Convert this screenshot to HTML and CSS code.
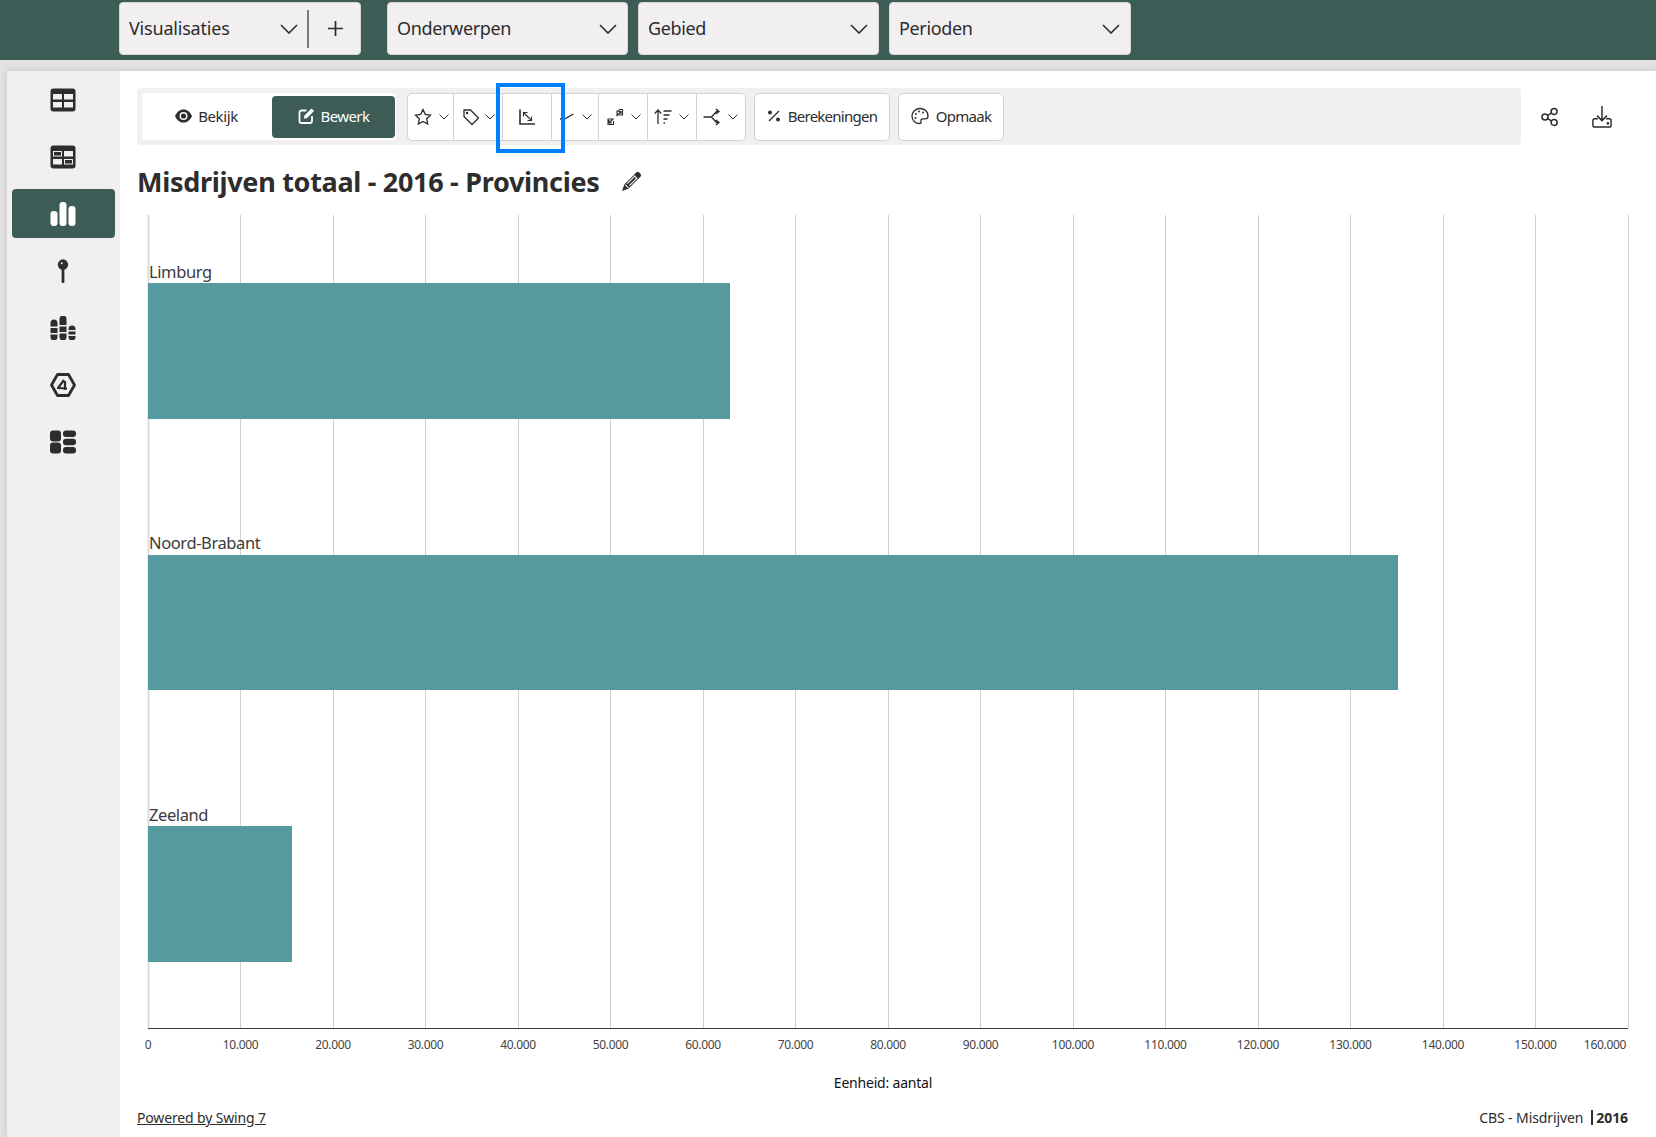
FILE: index.html
```html
<!DOCTYPE html>
<html lang="nl">
<head>
<meta charset="utf-8">
<title>Misdrijven totaal</title>
<link rel="stylesheet" href="styles.css">
</head>
<body>
<header class="topbar">
  <div class="select select-vis">
    <span class="select-label">Visualisaties</span>
    <svg class="chev-lg" viewBox="0 0 18 10"><path d="M1 1l8 8 8-8"/></svg>
    <span class="select-div"></span>
    <svg class="plus" viewBox="0 0 18 18"><path d="M9 1v16M1 9h16"/></svg>
  </div>
  <div class="select select-ond"><span class="select-label">Onderwerpen</span><svg class="chev-lg" viewBox="0 0 18 10"><path d="M1 1l8 8 8-8"/></svg></div>
  <div class="select select-geb"><span class="select-label">Gebied</span><svg class="chev-lg" viewBox="0 0 18 10"><path d="M1 1l8 8 8-8"/></svg></div>
  <div class="select select-per"><span class="select-label">Perioden</span><svg class="chev-lg" viewBox="0 0 18 10"><path d="M1 1l8 8 8-8"/></svg></div>
</header>
<div class="app">
  <nav class="sidebar">
    <div class="nav-item"><svg class="nav-icon" viewBox="0 0 26 24"><rect x="0.5" y="0.5" width="25" height="23" rx="3" fill="#2d2d2d"/><rect x="3" y="6" width="9" height="5.5" fill="#f1eff0"/><rect x="14" y="6" width="9" height="5.5" fill="#f1eff0"/><rect x="3" y="14" width="9" height="5.5" fill="#f1eff0"/><rect x="14" y="14" width="9" height="5.5" fill="#f1eff0"/></svg></div>
    <div class="nav-item"><svg class="nav-icon" viewBox="0 0 26 24"><rect x="0.5" y="0.5" width="25" height="23" rx="3" fill="#2d2d2d"/><rect x="3.5" y="6.5" width="8" height="4.5" fill="none" stroke="#f1eff0"/><rect x="14" y="6" width="9" height="5.5" fill="#f1eff0"/><rect x="3" y="14" width="9" height="5.5" fill="#f1eff0"/><rect x="14.5" y="14.5" width="8" height="4.5" fill="none" stroke="#f1eff0"/></svg></div>
    <div class="nav-item nav-active"><svg class="nav-icon" viewBox="0 0 26 24"><rect x="0.5" y="9" width="7" height="15" rx="3" fill="#fff"/><rect x="9.5" y="0" width="7" height="24" rx="3" fill="#fff"/><rect x="18.5" y="4" width="7" height="20" rx="3" fill="#fff"/></svg></div>
    <div class="nav-item"><svg class="nav-icon" viewBox="0 0 26 26"><circle cx="13" cy="6" r="5.6" fill="#2d2d2d"/><circle cx="11.6" cy="4.6" r="1" fill="#f1eff0"/><rect x="11.5" y="9" width="3" height="17" rx="1.2" fill="#2d2d2d"/></svg></div>
    <div class="nav-item"><svg class="nav-icon" viewBox="0 0 26 24"><path d="M0.500 7a3.500 3.500 0 0 1 7 0v3.500h-7zM0.500 12h7v5h-7zM0.500 18.500h7V21a3 3 0 0 1-7 0zM9.500 3a3.500 3.500 0 0 1 7 0v6h-7zM9.500 10.500h7V16h-7zM9.500 17.500h7V21a3.500 3.500 0 0 1-7 0zM18.500 13a3.500 3.500 0 0 1 7 0v1h-7zM18.500 15.500h7v3h-7zM18.500 20h7v1a3.500 3.500 0 0 1-7 0z" fill="#2d2d2d"/></svg></div>
    <div class="nav-item"><svg class="nav-icon" viewBox="0 0 26 24"><path d="M7.500 1.500h11L24.500 12l-6 10.500h-11L1.500 12z" fill="none" stroke="#2d2d2d" stroke-width="2.800" stroke-linejoin="round"/><path d="M14 7L8 15l9 .5M15 8v9" fill="none" stroke="#2d2d2d" stroke-width="2.200" stroke-linejoin="round"/></svg></div>
    <div class="nav-item"><svg class="nav-icon" viewBox="0 0 26 24"><rect x="0" y="0.500" width="11" height="11" rx="3" fill="#2d2d2d"/><rect x="0" y="12.500" width="11" height="11" rx="3" fill="#2d2d2d"/><rect x="13" y="0.500" width="13" height="6.500" rx="3" fill="#2d2d2d"/><rect x="13" y="8.700" width="13" height="6.500" rx="3" fill="#2d2d2d"/><rect x="13" y="17" width="13" height="6.500" rx="3" fill="#2d2d2d"/></svg></div>
  </nav>
  <main class="content">
    <div class="toolrow">
      <div class="toolbar">
        <div class="mode">
          <span class="mode-btn mode-view"><svg class="ic-mode" viewBox="0 0 18 14"><path d="M9 0C5 0 1.800 2.800 0 7c1.800 4.200 5 7 9 7s7.200-2.800 9-7c-1.800-4.200-5-7-9-7z" fill="#2d2d2d"/><circle cx="9" cy="7" r="4.200" fill="#fff"/><circle cx="9" cy="7" r="2.700" fill="#2d2d2d"/></svg>Bekijk</span>
          <span class="mode-btn mode-on"><svg class="ic-mode" viewBox="0 0 16 16"><path d="M8 2.500H3A2 2 0 0 0 1 4.500v8.500a2 2 0 0 0 2 2h8.500a2 2 0 0 0 2-2V8" fill="none" stroke="#fff" stroke-width="1.800"/><path d="M13 .5l2.500 2.500-7 7-3.300.8.800-3.300z" fill="#fff"/></svg>Bewerk</span>
        </div>
        <div class="group">
          <div class="seg seg-a"><svg class="ic" viewBox="0 0 18 18"><path d="M9 1.500l2.300 4.900 5.200.7-3.800 3.700.9 5.300L9 13.500l-4.600 2.600.9-5.300-3.800-3.700 5.200-.7z"/></svg><svg class="chev" viewBox="0 0 10 6"><path d="M.5.500L5 5 9.500.500"/></svg></div>
          <div class="seg seg-b"><svg class="ic ic-tag" viewBox="0 0 18 18"><path d="M2 2h6.500l8 8-6.500 6.500-8-8z" stroke-linejoin="round"/><circle cx="5" cy="5" r=".6"/></svg><svg class="chev" viewBox="0 0 10 6"><path d="M.5.500L5 5 9.500.500"/></svg></div>
          <div class="seg seg-c"><svg class="ic" viewBox="0 0 18 18"><path d="M2 1.500v14.500h15" stroke-width="1.600"/><path d="M5.500 4.500l8 8M5.500 8.500v-4h4M13.500 8.500v4h-4" stroke-width="1.100"/></svg></div>
          <div class="seg seg-d"><svg class="ic ic-line" viewBox="0 0 18 18"><path d="M1 11h4.500l9-5"/></svg><svg class="chev" viewBox="0 0 10 6"><path d="M.5.500L5 5 9.500.500"/></svg></div>
          <div class="seg seg-e"><svg class="ic" viewBox="0 0 18 18"><path d="M6 11H2v5.500h5.500V13M7.500 10.500l-4.500 4.500M3 12v3h3" stroke-width="1.100"/><path d="M11 7V3h1.500l1-1.500h3V7h-4M10.500 8L15 3.500M12.500 3.500H15V6" stroke-width="1.100"/></svg><svg class="chev" viewBox="0 0 10 6"><path d="M.5.500L5 5 9.500.500"/></svg></div>
          <div class="seg seg-f"><svg class="ic" viewBox="0 0 18 18"><path d="M4 16V2M.8 5.500L4 2l3.200 3.500M9.500 3h8M9.500 7h6M9.500 11h4M9.500 15h1.500"/></svg><svg class="chev" viewBox="0 0 10 6"><path d="M.5.500L5 5 9.500.500"/></svg></div>
          <div class="seg seg-g"><svg class="ic" viewBox="0 0 18 18"><path d="M.5 9h8l5-5.500H16M8.500 9l5 5.500H16M13 1l3 2.500-3 2.500M13 12l3 2.500-3 2.500"/></svg><svg class="chev" viewBox="0 0 10 6"><path d="M.5.500L5 5 9.500.500"/></svg></div>
          <span class="focus-box"></span>
        </div>
        <div class="tool-btn btn-calc"><svg class="ic ic-pct" viewBox="0 0 14 14"><path d="M12 2L2 12"/><circle cx="3" cy="3.500" r="1.300" fill="#2d2d2d"/><circle cx="11" cy="10.500" r="1.300" fill="#2d2d2d"/></svg>Berekeningen</div>
        <div class="tool-btn btn-style"><svg class="ic" viewBox="0 0 18 18"><path d="M9 1.500C4.500 1.500 1 5 1 9.200s3.500 7.300 7.500 7.300c1.500 0 2-1 1.500-2.200-.5-1.400.3-2.500 1.800-2.500h2.500c1.900 0 2.700-1 2.700-2.900 0-4.300-3.500-7.400-8-7.400z"/><circle cx="5" cy="7" r="1" fill="#2d2d2d" stroke="none"/><circle cx="8" cy="4.500" r="1" fill="#2d2d2d" stroke="none"/><circle cx="12" cy="5.500" r="1" fill="#2d2d2d" stroke="none"/><circle cx="4.500" cy="11" r="1" fill="#2d2d2d" stroke="none"/></svg>Opmaak</div>
      </div>
      <div class="actions">
        <svg class="act-share" viewBox="0 0 20 22"><circle cx="4.500" cy="11" r="3.300"/><circle cx="14.500" cy="5" r="3.300"/><circle cx="14.500" cy="17" r="3.300"/><path d="M7.500 9.300l4-2.600M7.500 12.700l4 2.600"/></svg>
        <svg class="act-down" viewBox="0 0 22 26"><path d="M11 1v16M5.500 11.500L11 17l5.500-5.500"/><path d="M6.500 15H3a2 2 0 0 0-2 2v5a2 2 0 0 0 2 2h16a2 2 0 0 0 2-2v-5a2 2 0 0 0-2-2h-3.500"/><circle cx="17.500" cy="20" r=".7"/></svg>
      </div>
    </div>
    <div class="title-row">
      <h1 class="title">Misdrijven totaal - 2016 - Provincies</h1>
      <svg class="pencil" viewBox="0 0 20 20"><path d="M14.500 1.500a2 2 0 0 1 2.800 0l1.200 1.200a2 2 0 0 1 0 2.800L7 17l-6 2 2-6z" fill="#2d2d2d"/><path d="M12.500 4.500l3 3M4 13l3 3M6 12l7.500-7.500M8 14l7.500-7.500" stroke="#fff" stroke-width="1" fill="none"/></svg>
    </div>
    <svg class="chart" viewBox="0 0 1519 883" width="1519" height="883">
      <g class="grid">
        <path d="M103.500 0V813M196.500 0V813M288.500 0V813M381.500 0V813M473.500 0V813M566.500 0V813M658.500 0V813M751.500 0V813M843.500 0V813M936.500 0V813M1028.500 0V813M1121.500 0V813M1213.500 0V813M1306.500 0V813M1398.500 0V813M1491.500 0V813"/>
        <path class="grid-first" d="M11.500 0V813"/>
      </g>
      <rect class="bar" x="11" y="68" width="582" height="136"/>
      <rect class="bar" x="11" y="340" width="1250" height="135"/>
      <rect class="bar" x="11" y="611" width="144" height="136"/>
      <text class="cat" x="12" y="63">Limburg</text>
      <text class="cat" x="12" y="334">Noord-Brabant</text>
      <text class="cat" x="12" y="606">Zeeland</text>
      <path class="axis" d="M11 813.500H1491"/>
      <g class="tick">
        <text x="11" y="834">0</text><text x="103.500" y="834">10.000</text><text x="196" y="834">20.000</text><text x="288.500" y="834">30.000</text><text x="381" y="834">40.000</text><text x="473.500" y="834">50.000</text><text x="566" y="834">60.000</text><text x="658.500" y="834">70.000</text><text x="751" y="834">80.000</text><text x="843.500" y="834">90.000</text><text x="936" y="834">100.000</text><text x="1028.500" y="834">110.000</text><text x="1121" y="834">120.000</text><text x="1213.500" y="834">130.000</text><text x="1306" y="834">140.000</text><text x="1398.500" y="834">150.000</text><text x="1468" y="834">160.000</text>
      </g>
      <text class="unit" x="746" y="873">Eenheid: aantal</text>
    </svg>
    <footer class="foot">
      <a class="foot-link" href="#">Powered by Swing 7</a>
      <span class="foot-src">CBS - Misdrijven <span class="foot-sep"></span><b>2016</b></span>
    </footer>
  </main>
</div>
</body>
</html>
```
FILE: styles.css
```css
* { box-sizing: border-box; }
html, body { margin: 0; height: 100%; }
body {
  background: #e4e2e3;
  color: #2d2d2d;
  font-family: "Noto Sans", "Liberation Sans", sans-serif;
  overflow: hidden;
  width: 1656px;
  height: 1137px;
}
.topbar {
  height: 60px;
  background: #3c5c55;
  display: flex;
  padding: 2px 0 0 119px;
}
.select {
  height: 53px;
  width: 241px;
  background: #f1eff0;
  border: 1px solid #d8d6d7;
  border-radius: 4px;
  display: flex;
  align-items: center;
  padding: 0 10px 0 9px;
  font-size: 18px;
  letter-spacing: -0.35px;
  justify-content: space-between;
}
.select-label { padding-bottom: 2px; }
.select-vis { padding-right: 16px; justify-content: flex-start; width: 242px; letter-spacing: -0.2px; }
.select-vis .select-label { flex: 1; }
.select-ond { margin-left: 26px; }
.select-geb { margin-left: 10px; }
.select-per { margin-left: 10px; width: 242px; }
.chev-lg { width: 18px; height: 10px; fill: none; stroke: #2d2d2d; stroke-width: 1.600; }
.select-div { width: 2px; height: 38px; background: #77797a; margin: 0 18px 0 9px; }
.plus { width: 17px; height: 17px; fill: none; stroke: #2d2d2d; stroke-width: 1.800; }
.app { display: flex; margin: 11px 0 0 7px; height: 1066px; box-shadow: 0 0 8px rgba(0,0,0,.12); }
.sidebar {
  width: 113px;
  background: #f1eff0;
  padding: 4px 0 0 5px;
  display: flex;
  flex-direction: column;
  gap: 8px;
}
.nav-item { width: 103px; height: 49px; border-radius: 4px; display: flex; align-items: center; justify-content: center; }
.nav-active { background: #3c5c55; }
.nav-icon { width: 26px; height: 24px; margin-right: 1px; }
.content { flex: 1; background: #fff; padding: 17px 0 0 17px; }
.toolrow { display: flex; align-items: center; }
.toolbar {
  width: 1384px;
  height: 57px;
  background: #f1eff0;
  border-radius: 4px;
  display: flex;
  align-items: center;
  padding-left: 5px;
}
.mode { width: 254px; height: 47px; background: #fff; border-radius: 3px; display: flex; align-items: center; justify-content: flex-end; padding-right: 1px; font-size: 15px; letter-spacing: -0.4px; }
.mode-btn { width: 123px; height: 42px; border-radius: 4px; display: flex; align-items: center; justify-content: center; gap: 6px; padding-bottom: 1px; }
.mode-view { padding-right: 8px; }
.mode-on { background: #3c5c55; color: #fff; letter-spacing: -0.6px; }
.ic-mode { width: 17px; height: 16px; }
.group {
  position: relative;
  margin-left: 11px;
  width: 339px;
  height: 48px;
  background: #fff;
  border: 1px solid #d3d1d2;
  border-radius: 5px;
  display: flex;
}
.seg { height: 100%; display: flex; align-items: center; border-right: 1px solid #d3d1d2; }
.seg-a { width: 46px; padding-left: 6px; gap: 7px; }
.seg-b { width: 49px; padding-left: 8px; gap: 5px; }
.seg-c { width: 49px; justify-content: center; }
.seg-d { width: 47px; padding-left: 7px; gap: 5px; }
.seg-e { width: 49px; padding-left: 7px; gap: 7px; }
.seg-f { width: 49px; padding-left: 6px; gap: 7px; }
.seg-g { width: 48px; padding-left: 6px; gap: 7px; border-right: 0; }
.ic { width: 18px; height: 18px; fill: none; stroke: #2d2d2d; stroke-width: 1.300; flex: none; }
.ic-pct { width: 14px; height: 14px; }
.chev { width: 10px; height: 6px; fill: none; stroke: #2d2d2d; stroke-width: 1; flex: none; }
.focus-box {
  position: absolute;
  left: 88px;
  top: -11px;
  width: 69px;
  height: 70px;
  border: 4px solid #0080ff;
}
.tool-btn {
  height: 48px;
  background: #fff;
  border: 1px solid #d3d1d2;
  border-radius: 5px;
  display: flex;
  align-items: center;
  justify-content: center;
  gap: 7px;
  padding-bottom: 1px;
  font-size: 15px;
  letter-spacing: -0.75px;
}
.btn-calc { width: 136px; margin-left: 8px; }
.btn-style { width: 106px; margin-left: 8px; }
.actions { display: flex; align-items: center; margin-left: 19px; gap: 32px; }
.act-share { width: 20px; height: 20px; fill: none; stroke: #2d2d2d; stroke-width: 1.700; }
.act-down { width: 20px; height: 24px; fill: none; stroke: #2d2d2d; stroke-width: 1.600; }
.title-row { display: flex; align-items: center; height: 54px; margin-top: 9px; }
.title { margin: 0; font-size: 27px; font-weight: 700; letter-spacing: -0.3px; line-height: 1; }
.pencil { width: 21px; height: 21px; margin-left: 21px; }
.chart { display: block; margin: 7px 0 0 0; }
.grid path { stroke: #cfcfcf; fill: none; stroke-width: 1; }
.grid .grid-first { stroke: #dcdcdc; stroke-width: 2; }
.bar { fill: #549a9f; }
.cat { font-size: 16.500px; fill: #3a3a3a; letter-spacing: -0.4px; }
.axis { stroke: #3a3a3a; stroke-width: 1.200; fill: none; }
.tick text { font-size: 12px; text-anchor: middle; fill: #444; letter-spacing: -0.3px; }
.unit { font-size: 14px; text-anchor: middle; fill: #111; letter-spacing: -0.2px; }
.foot { display: flex; justify-content: space-between; align-items: center; width: 1491px; margin-top: 10px; font-size: 14px; letter-spacing: -0.15px; }
.foot-link { color: #2d2d2d; }
.foot-src { display: flex; align-items: center; letter-spacing: -0.1px; }
.foot-sep { width: 2px; height: 15px; background: #2d2d2d; margin: 0 3px 0 8px; }
```
